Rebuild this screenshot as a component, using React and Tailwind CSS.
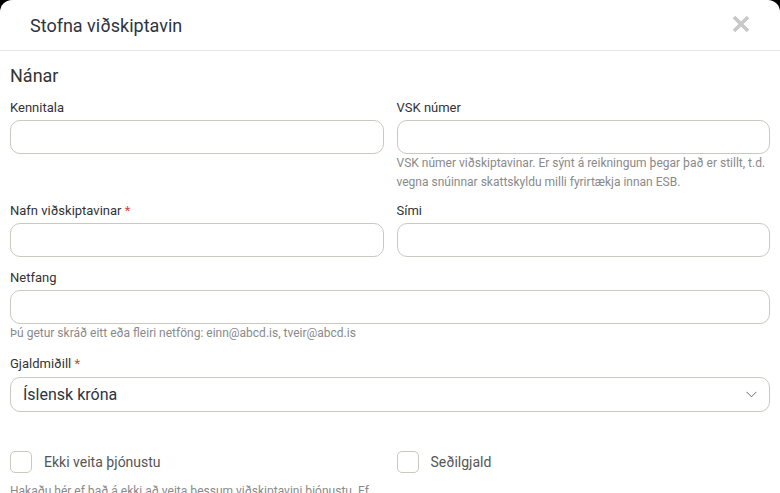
import React from "react";

const Label = ({ children, required }) => (
  <div className="text-[13px] leading-[18px] text-[#333]">
    {children}
    {required && <span className="text-[#e53e3e]"> *</span>}
  </div>
);

const Input = () => (
  <input
    type="text"
    className="mt-[3px] block h-[34px] w-full rounded-[10px] border border-[#c9c9c2] bg-white px-3 outline-none"
  />
);

const Help = ({ children }) => (
  <div className="text-[12px] leading-[19px] text-[#8a8a8a]">{children}</div>
);

const Field = ({ label, required, help, className = "mb-[11px]" }) => (
  <div className={className}>
    <Label required={required}>{label}</Label>
    <Input />
    {help && <Help>{help}</Help>}
  </div>
);

const Checkbox = ({ label }) => (
  <label className="flex items-center gap-[12px]">
    <span className="block h-[22px] w-[22px] rounded-[5px] border border-[#c9c9c2] bg-white" />
    <span className="text-[14px] text-[#555]">{label}</span>
  </label>
);

export default function App() {
  return (
    <div className="h-[493px] overflow-hidden bg-black font-['Roboto',sans-serif]">
      <div className="h-full rounded-t-[12px] bg-white">
        <div className="flex h-[51px] items-center justify-between border-b border-[#e6e6e6] pl-[30px] pr-[30px]">
          <h1 className="text-[18px] font-normal text-[#2d3440]">Stofna viðskiptavin</h1>
          <svg width="18" height="18" viewBox="0 0 18 18" className="mt-[-2px]">
            <path d="M2 2 L16 16 M16 2 L2 16" stroke="#c8c8c8" strokeWidth="3.6" />
          </svg>
        </div>

        <div className="px-[10px]">
          <h2 className="mt-[13px] text-[18px] leading-[24px] text-[#333]">Nánar</h2>

          <div className="mt-[11px] grid grid-cols-2 gap-x-[13px]">
            <Field label="Kennitala" className="mb-[10px]" />
            <Field
              label="VSK númer"
              className="mb-[10px]"
              help="VSK númer viðskiptavinar. Er sýnt á reikningum þegar það er stillt, t.d. vegna snúinnar skattskyldu milli fyrirtækja innan ESB."
            />
            <Field label="Nafn viðskiptavinar" required className="mb-[12px]" />
            <Field label="Sími" className="mb-[12px]" />
          </div>

          <Field
            label="Netfang"
            className="mb-[12px]"
            help="Þú getur skráð eitt eða fleiri netföng: einn@abcd.is, tveir@abcd.is"
          />

          <div>
            <Label required>Gjaldmiðill</Label>
            <div className="mt-[4px] flex h-[35px] items-center justify-between rounded-[10px] border border-[#c9c9c2] pl-[12px] pr-[12px]">
              <span className="text-[16px] text-[#2d3440]">Íslensk króna</span>
              <svg width="11" height="7" viewBox="0 0 11 7">
                <path d="M0.5 0.8 L5.5 5.8 L10.5 0.8" fill="none" stroke="#6b6b6b" strokeWidth="1" />
              </svg>
            </div>
          </div>

          <div className="mt-[39px] grid grid-cols-2 gap-x-[13px]">
            <Checkbox label="Ekki veita þjónustu" />
            <Checkbox label="Seðilgjald" />
          </div>
          <div className="mt-[9px] text-[12px] leading-[19px] text-[#8a8a8a]">
            Hakaðu hér ef það á ekki að veita þessum viðskiptavini þjónustu. Ef
          </div>
        </div>
      </div>
    </div>
  );
}
